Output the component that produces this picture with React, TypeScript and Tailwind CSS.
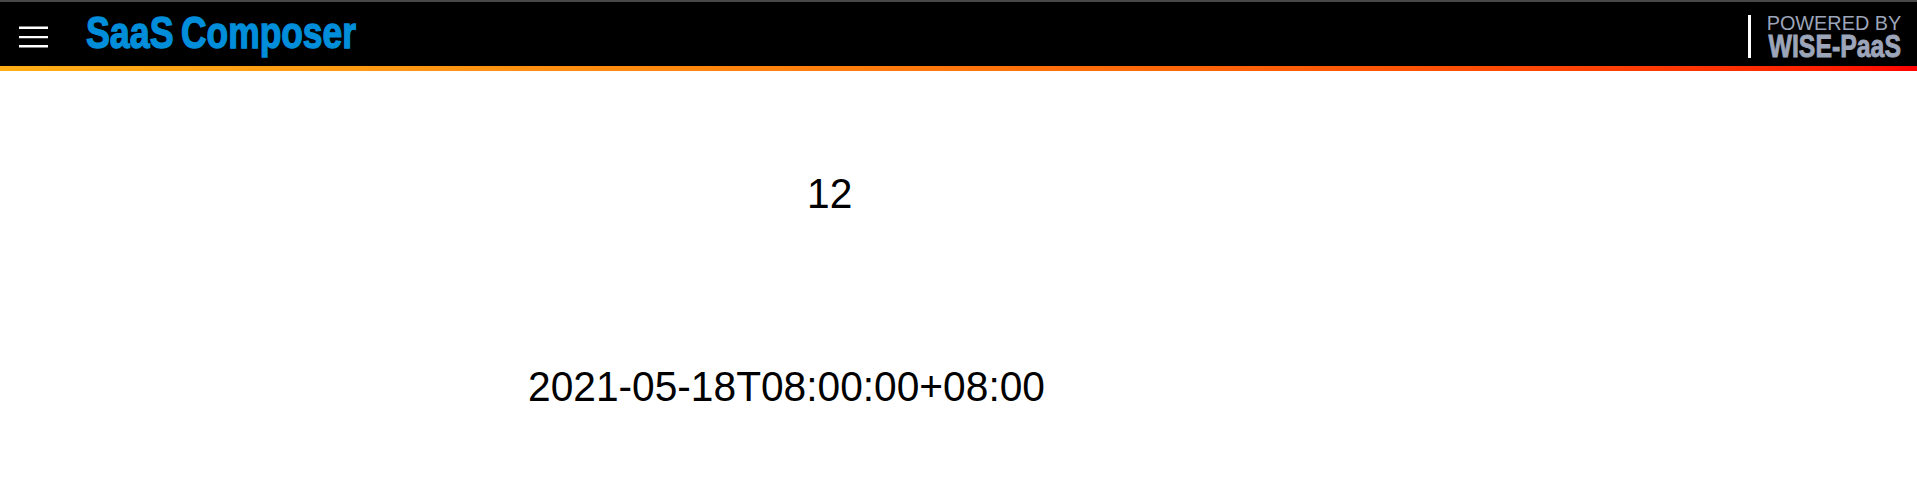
function MenuButton() {
  return (
    <button aria-label="Menu" className="ml-[19px] mt-6 h-[22px] w-[29px] shrink-0">
      <svg width="29" height="22" viewBox="0 0 29 22" className="block">
        <path d="M0 1.7H29M0 11.1H29M0 20.3H29" stroke="#fff" strokeWidth="2.4" />
      </svg>
    </button>
  );
}

function ComposerLogo() {
  return (
    <svg width="284" height="56" viewBox="0 0 284 56" className="ml-9 mt-1.5 block shrink-0 overflow-visible font-['Liberation_Sans',sans-serif] font-bold" fill="#008dda" stroke="#008dda" strokeWidth="1.4" fontSize="43.6">
      <text x="2" y="40.2" textLength="87.5" lengthAdjust="spacingAndGlyphs">SaaS</text>
      <text x="97" y="40.2" textLength="175" lengthAdjust="spacingAndGlyphs">Composer</text>
    </svg>
  );
}

function PoweredBy() {
  return (
    <div className="ml-auto mr-[11px] mt-[13px] flex h-[43px]">
      <div className="-ml-px w-[3px] bg-white" />
      <svg width="138" height="50" viewBox="0 0 138 50" className="ml-[17px] block overflow-visible font-['Liberation_Sans',sans-serif]" fill="#9ca5b9">
        <text x="-1.3" y="14.8" fontSize="20.5" textLength="134.5" lengthAdjust="spacingAndGlyphs">POWERED BY</text>
        <text x="0.5" y="42" fontSize="31.5" fontWeight="700" stroke="#9ca5b9" strokeWidth="0.9" textLength="132.5" lengthAdjust="spacingAndGlyphs">WISE-PaaS</text>
      </svg>
    </div>
  );
}

export default function App() {
  return (
    <div className="h-[480px] w-full overflow-hidden bg-white font-['Liberation_Sans',Arial,sans-serif] text-[40.7px] text-black">
      <header className="flex h-[66px] items-start border-t-2 border-[#484848] bg-black">
        <MenuButton />
        <ComposerLogo />
        <PoweredBy />
      </header>
      <div className="h-[5px] bg-linear-to-r from-[#ffae17] via-[#ff760c] via-50% to-[#ff0000]" />
      <main className="flex flex-col items-start leading-[46px]">
        <p className="ml-[807px] mt-[99px] origin-center scale-y-[1.045]">12</p>
        <p className="ml-[528px] mt-[147px] origin-center scale-y-[1.045] whitespace-nowrap">2021-05-18T08:00:00+08:00</p>
      </main>
    </div>
  );
}
